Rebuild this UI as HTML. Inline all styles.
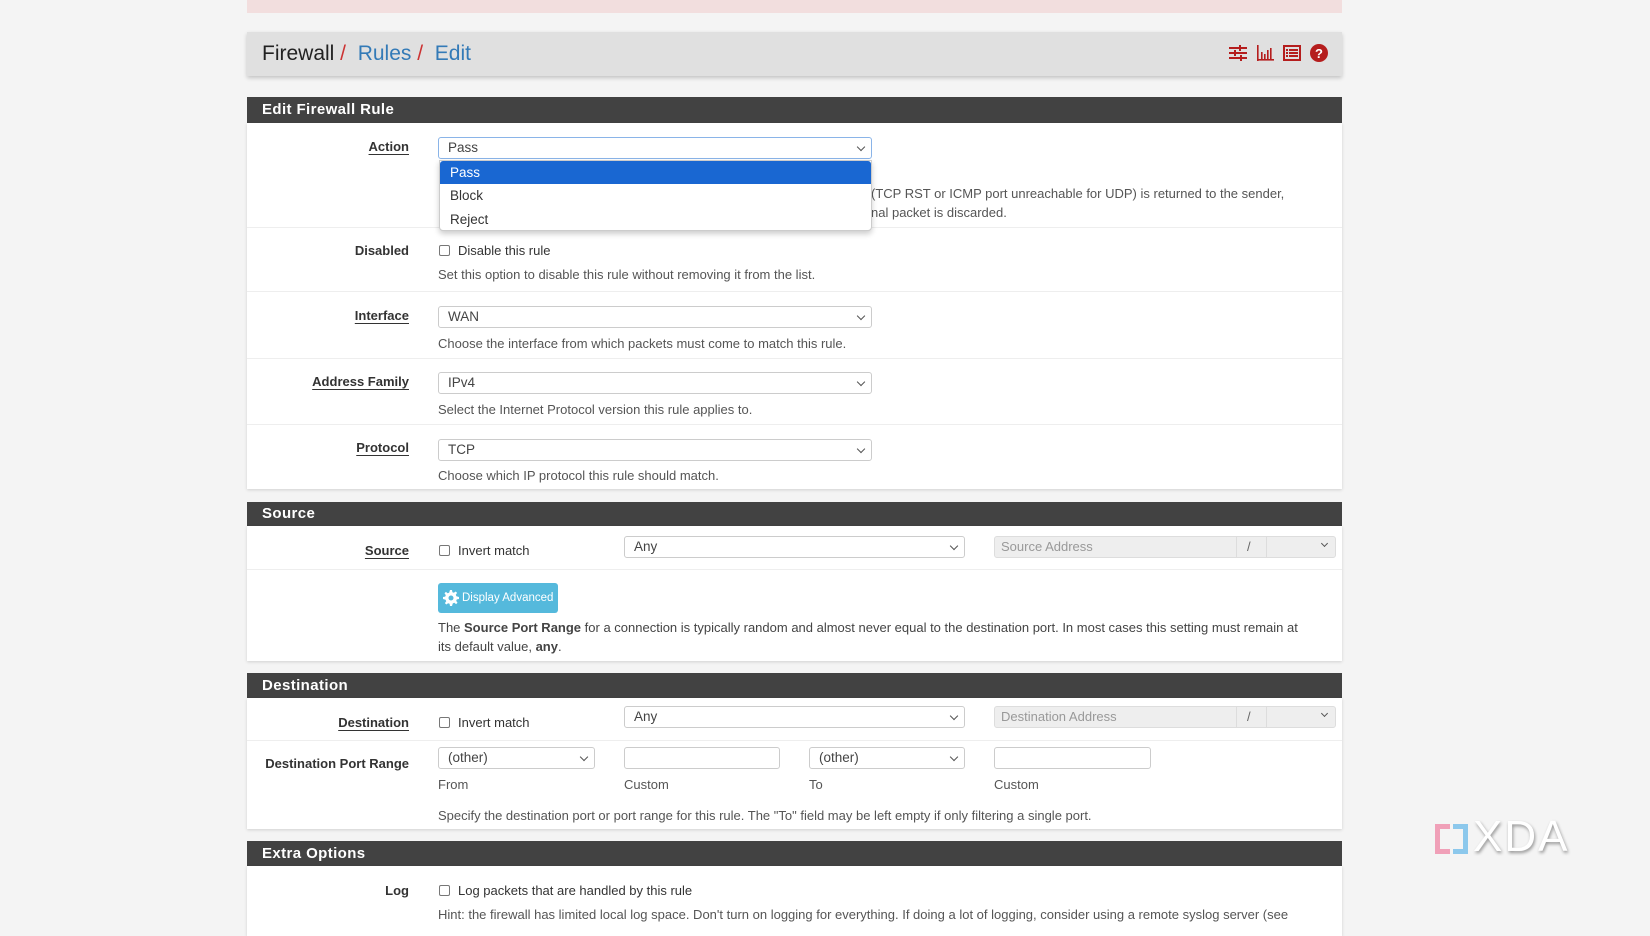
<!DOCTYPE html>
<html><head><meta charset="utf-8"><style>
*{box-sizing:border-box;margin:0;padding:0}
body{width:1650px;height:928px;overflow:hidden;background:#f4f4f4;font-family:"Liberation Sans",sans-serif;font-size:13px;color:#333;position:relative}
.a{position:absolute}
.panel{position:absolute;left:247px;width:1095px;background:#fff;box-shadow:0 1px 3px rgba(0,0,0,.15)}
.hdr{position:absolute;left:247px;width:1095px;background:#424242;color:#fff;font-weight:bold;font-size:15px;padding-left:15px;letter-spacing:.4px}
.lbl{position:absolute;right:1241px;font-weight:bold;color:#333;font-size:13px;white-space:nowrap}
.u{text-decoration:underline;text-underline-offset:3px}
.sel{position:absolute;height:22px;border:1px solid #ccc;border-radius:3px;background:#fff;padding-left:9px;line-height:20px;font-size:13.5px;color:#444}
.sel:after{content:"";position:absolute;right:7px;top:6px;width:5px;height:5px;border-right:1.3px solid #555;border-bottom:1.3px solid #555;transform:rotate(45deg)}
.inp{position:absolute;height:22px;border:1px solid #ccc;border-radius:3px;background:#fff}
.help{position:absolute;left:438px;color:#555;font-size:13px;white-space:nowrap}
.div{position:absolute;left:247px;width:1095px;height:1px;background:#eee}
.cb{position:absolute;width:11px;height:11px;border:1px solid #777;border-radius:2px;background:#fff}
.t{position:absolute;white-space:nowrap;font-size:13px;color:#333}
</style></head><body>
<div class="a" style="left:247px;top:0;width:1095px;height:13px;background:#f2dede"></div>
<div class="a" style="left:247px;top:32px;width:1095px;height:44px;background:#e0e0e0;box-shadow:0 2px 4px rgba(0,0,0,.2)"></div>
<div class="a" style="left:262px;top:42px;font-size:21px;color:#222;white-space:nowrap">Firewall<span style="color:#c33"> / </span>&nbsp;<span style="color:#337ab7">Rules</span><span style="color:#c33"> / </span>&nbsp;<span style="color:#337ab7">Edit</span></div>
<svg class="a" style="left:1228px;top:43px" width="100" height="22" viewBox="0 0 100 22">
<g fill="#b51d1d"><rect x="1" y="4" width="18" height="2"/><rect x="1" y="9" width="18" height="2"/><rect x="1" y="14" width="18" height="2"/><rect x="11" y="2" width="2" height="6"/><rect x="6" y="7" width="2" height="6"/><rect x="12" y="12" width="2" height="6"/>
<rect x="29" y="2" width="1.6" height="16"/><rect x="29" y="16" width="17" height="1.6"/><rect x="33" y="9" width="1.6" height="7"/><rect x="36" y="11" width="1.6" height="5"/><rect x="39" y="7" width="1.6" height="9"/><rect x="42" y="5" width="1.6" height="11"/>
<path d="M55 2h18v16h-18z M57 4v12h14v-12z" fill-rule="evenodd"/><rect x="58" y="6" width="2" height="2"/><rect x="61" y="6" width="9" height="2"/><rect x="58" y="9" width="2" height="2"/><rect x="61" y="9" width="9" height="2"/><rect x="58" y="12" width="2" height="2"/><rect x="61" y="12" width="9" height="2"/>
<circle cx="91" cy="10" r="9"/></g>
<text x="91" y="15" font-size="13" font-weight="bold" fill="#fff" text-anchor="middle" font-family="Liberation Sans">?</text></svg>

<div class="hdr" style="top:97px;height:26px;line-height:26px">Edit Firewall Rule</div>
<div class="panel" style="top:123px;height:366px"></div>
<div class="lbl u" style="top:139px">Action</div>
<div class="sel" style="left:438px;top:137px;width:434px;border-color:#8ab4e8">Pass</div>
<div class="t" style="left:871px;top:186px;color:#555">(TCP RST or ICMP port unreachable for UDP) is returned to the sender,</div>
<div class="t" style="left:871px;top:205px;color:#555">nal packet is discarded.</div>
<div class="div" style="top:227px"></div>
<div class="lbl" style="top:243px">Disabled</div>
<div class="cb" style="left:439px;top:245px"></div>
<div class="t" style="left:458px;top:243px">Disable this rule</div>
<div class="help" style="top:267px">Set this option to disable this rule without removing it from the list.</div>
<div class="div" style="top:291px"></div>
<div class="lbl u" style="top:308px">Interface</div>
<div class="sel" style="left:438px;top:306px;width:434px">WAN</div>
<div class="help" style="top:336px">Choose the interface from which packets must come to match this rule.</div>
<div class="div" style="top:358px"></div>
<div class="lbl u" style="top:374px">Address Family</div>
<div class="sel" style="left:438px;top:372px;width:434px">IPv4</div>
<div class="help" style="top:402px">Select the Internet Protocol version this rule applies to.</div>
<div class="div" style="top:424px"></div>
<div class="lbl u" style="top:440px">Protocol</div>
<div class="sel" style="left:438px;top:439px;width:434px">TCP</div>
<div class="help" style="top:468px">Choose which IP protocol this rule should match.</div>

<div class="a" style="left:439px;top:160px;width:433px;height:71px;background:#fff;border:1px solid #ccc;border-radius:0 0 4px 4px;box-shadow:0 3px 6px rgba(0,0,0,.2);font-size:13.5px">
<div style="height:23px;background:#1967d2;color:#fff;line-height:23px;padding-left:10px;border-radius:3px 3px 0 0">Pass</div>
<div style="height:24px;line-height:24px;padding-left:10px;color:#333">Block</div>
<div style="height:24px;line-height:24px;padding-left:10px;color:#333">Reject</div></div>

<div class="hdr" style="top:502px;height:24px;line-height:24px">Source</div>
<div class="panel" style="top:526px;height:135px"></div>
<div class="lbl u" style="top:543px">Source</div>
<div class="cb" style="left:439px;top:545px"></div>
<div class="t" style="left:458px;top:543px">Invert match</div>
<div class="sel" style="left:624px;top:536px;width:341px">Any</div>
<div class="a" style="left:994px;top:536px;width:342px;height:22px;background:#eee;border:1px solid #ddd;border-radius:3px"></div>
<div class="t" style="left:1001px;top:539px;color:#999">Source Address</div>
<div class="a" style="left:1236px;top:536px;width:1px;height:22px;background:#ddd"></div>
<div class="t" style="left:1247px;top:539px;color:#666">/</div>
<div class="a" style="left:1266px;top:536px;width:1px;height:22px;background:#ddd"></div>
<div class="a" style="left:1322px;top:541px;width:5px;height:5px;border-right:1.3px solid #555;border-bottom:1.3px solid #555;transform:rotate(45deg)"></div>
<div class="div" style="top:569px"></div>
<div class="a" style="left:438px;top:583px;width:120px;height:30px;background:#55b9dc;border-radius:3px;color:#fff;font-size:11.5px;line-height:30px;padding-left:24px;white-space:nowrap">Display Advanced
<svg style="position:absolute;left:5px;top:7px" width="16" height="16" viewBox="0 0 16 16"><path fill="#fff" d="M7 0h2l.4 2.2 1.5.6 1.8-1.3 1.4 1.4-1.3 1.8.6 1.5L16 7v2l-2.2.4-.6 1.5 1.3 1.8-1.4 1.4-1.8-1.3-1.5.6L9 16H7l-.4-2.2-1.5-.6-1.8 1.3-1.4-1.4 1.3-1.8-.6-1.5L0 9V7l2.2-.4.6-1.5-1.3-1.8 1.4-1.4 1.8 1.3 1.5-.6z"/><circle cx="8" cy="8" r="2.5" fill="#55b9dc"/></svg></div>
<div class="help" style="top:620px;color:#444">The <b>Source Port Range</b> for a connection is typically random and almost never equal to the destination port. In most cases this setting must remain at</div>
<div class="help" style="top:639px;color:#444">its default value, <b>any</b>.</div>

<div class="hdr" style="top:673px;height:25px;line-height:25px">Destination</div>
<div class="panel" style="top:698px;height:131px"></div>
<div class="lbl u" style="top:715px">Destination</div>
<div class="cb" style="left:439px;top:717px"></div>
<div class="t" style="left:458px;top:715px">Invert match</div>
<div class="sel" style="left:624px;top:706px;width:341px">Any</div>
<div class="a" style="left:994px;top:706px;width:342px;height:22px;background:#eee;border:1px solid #ddd;border-radius:3px"></div>
<div class="t" style="left:1001px;top:709px;color:#999">Destination Address</div>
<div class="a" style="left:1236px;top:706px;width:1px;height:22px;background:#ddd"></div>
<div class="t" style="left:1247px;top:709px;color:#666">/</div>
<div class="a" style="left:1266px;top:706px;width:1px;height:22px;background:#ddd"></div>
<div class="a" style="left:1322px;top:711px;width:5px;height:5px;border-right:1.3px solid #555;border-bottom:1.3px solid #555;transform:rotate(45deg)"></div>
<div class="div" style="top:740px"></div>
<div class="lbl" style="top:756px">Destination Port Range</div>
<div class="sel" style="left:438px;top:747px;width:157px">(other)</div>
<div class="inp" style="left:624px;top:747px;width:156px"></div>
<div class="sel" style="left:809px;top:747px;width:156px">(other)</div>
<div class="inp" style="left:994px;top:747px;width:157px"></div>
<div class="help" style="top:777px">From</div>
<div class="help" style="left:624px;top:777px">Custom</div>
<div class="help" style="left:809px;top:777px">To</div>
<div class="help" style="left:994px;top:777px">Custom</div>
<div class="help" style="top:808px">Specify the destination port or port range for this rule. The "To" field may be left empty if only filtering a single port.</div>

<div class="hdr" style="top:841px;height:25px;line-height:25px">Extra Options</div>
<div class="panel" style="top:866px;height:70px"></div>
<div class="lbl" style="top:883px">Log</div>
<div class="cb" style="left:439px;top:885px"></div>
<div class="t" style="left:458px;top:883px">Log packets that are handled by this rule</div>
<div class="help" style="top:907px">Hint: the firewall has limited local log space. Don't turn on logging for everything. If doing a lot of logging, consider using a remote syslog server (see</div>

<div class="a" style="left:1431px;top:816px;width:160px;height:50px">
<div class="a" style="left:4px;top:8px;width:15px;height:30px;border:5px solid #f0a0b8;border-right:none"></div>
<div class="a" style="left:22px;top:8px;width:15px;height:30px;border:5px solid #8cc8ec;border-left:none"></div>
<div class="a" style="left:42px;top:-4px;font-size:44px;color:#fff;font-family:'Liberation Sans',sans-serif;letter-spacing:2px;text-shadow:1px 2px 3px rgba(0,0,0,.4)">XDA</div></div>
</body></html>
